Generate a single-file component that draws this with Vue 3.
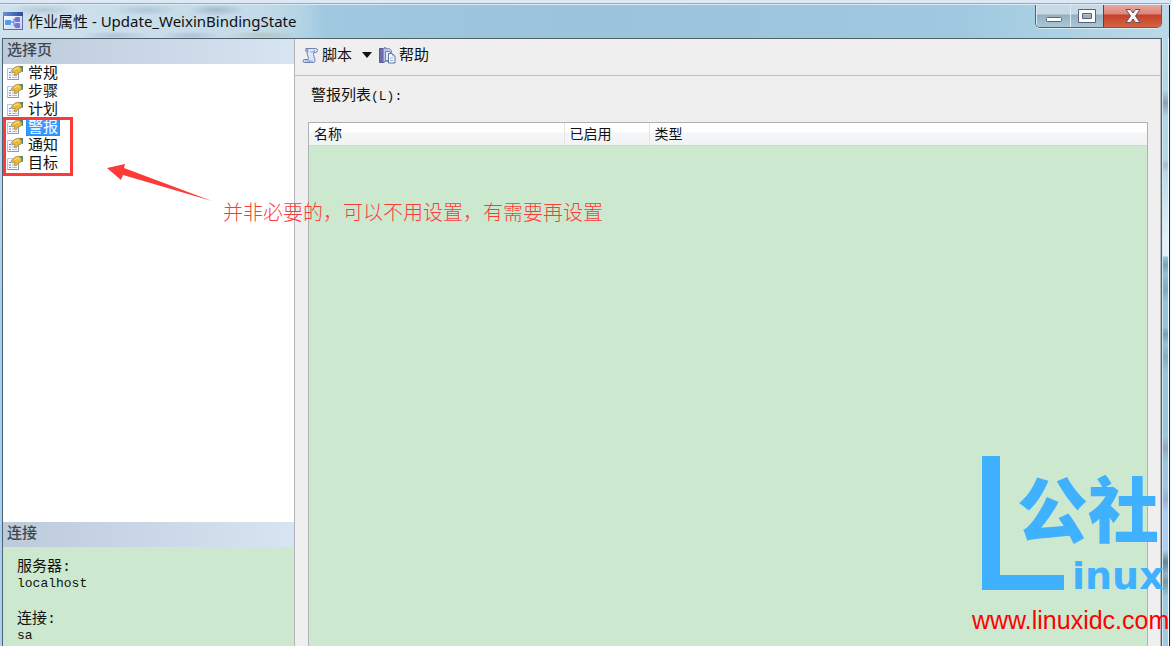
<script setup>
import { ref } from 'vue'

const pages = ['常规', '步骤', '计划', '警报', '通知', '目标']
const selected = ref('警报')
const columns = ['名称', '已启用', '类型']
</script>

<template>
  <div class="window">
    <header class="titlebar">
      <svg class="app-icon" width="20" height="18" viewBox="0 0 20 18" aria-hidden="true">
        <defs>
          <linearGradient id="appbar" x1="0" x2="1"><stop offset="0" stop-color="#6d8fd2" /><stop offset="1" stop-color="#2f4a9c" /></linearGradient>
          <linearGradient id="appbg" x1="0" x2="1" y2="1"><stop offset="0" stop-color="#fff" /><stop offset="1" stop-color="#c3cff0" /></linearGradient>
        </defs>
        <rect x=".5" y=".5" width="19" height="17" fill="url(#appbg)" stroke="#5870ad" />
        <rect width="20" height="4" fill="url(#appbar)" />
        <path d="M7 10h4M11 7v7M11 7h3M11 14h3" stroke="#7168c4" fill="none" />
        <rect x="2" y="8" width="6" height="5" rx="1" fill="#4b9df2" />
        <rect x="12" y="5" width="5" height="5" rx="1" fill="#7774d4" />
        <rect x="12" y="11" width="5" height="5" rx="1" fill="#7774d4" />
      </svg>
      <h1>作业属性 - Update_WeixinBindingState</h1>
      <div class="controls">
        <button class="min" aria-label="最小化">
          <svg width="18" height="16" viewBox="0 0 18 16"><rect x="1.5" y="9.5" width="15" height="4" rx="1" fill="#fff" stroke="#59656f" /></svg>
        </button>
        <button class="max" aria-label="最大化">
          <svg width="18" height="16" viewBox="0 0 18 16"><path fill="#fff" fill-rule="evenodd" stroke="#59617a" d="M.5 1.500h17v13H.5zM4.500 5.500h9v5h-9z" /></svg>
        </button>
        <button class="close" aria-label="关闭">
          <svg width="16" height="14" viewBox="0 0 16 14"><path d="M1 .5h4.500L8 4l2.500-3.500H15L10.500 7l4.500 6.500h-4.500L8 10l-2.500 3.500H1L5.500 7z" fill="#f8f8f8" stroke="#6b4b55" /></svg>
        </button>
      </div>
    </header>

    <div class="client">
      <aside>
        <h2>选择页</h2>
        <nav>
          <button v-for="page in pages" :key="page" :class="{ selected: selected === page }" @click="selected = page">
            <svg width="17" height="16" viewBox="0 0 17 16" aria-hidden="true">
              <path d="M.5 3.500h11v11H.5z" fill="#f7f9ff" stroke="#b9c2d8" />
              <path d="M.5 14.500h11V8" fill="none" stroke="#8b98bd" />
              <path d="M2 7.500h2M2 10h2M2 12.500h2" stroke="#6d8cd4" />
              <path d="M5 10h5M5 12.500h5" stroke="#b4bdd5" />
              <path d="M12 1h4v6l-3-1z" fill="#52866e" />
              <path d="M4 6l4-4 4-1 3 3-1 3-3 1-2 3-2-1 1-3-3 1z" fill="#e9b93a" stroke="#a8853a" stroke-width=".7" />
              <path d="M7 5l3-2 2 1" fill="none" stroke="#ffe68a" />
            </svg>
            <span>{{ page }}</span>
          </button>
        </nav>
        <h2>连接</h2>
        <dl>
          <dt>服务器:</dt>
          <dd>localhost</dd>
          <dt>连接:</dt>
          <dd>sa</dd>
        </dl>
      </aside>

      <main>
        <div class="toolbar">
          <button>
            <svg width="17" height="17" viewBox="0 0 17 17" aria-hidden="true">
              <path d="M4 1.500h9.500q2 0 2 2t-2 2H12q-1 2 0 4t1 4q0 2-2 2H3q-2 0-2-1.500t2-1.500h3q1-1 0-3T5 5z" fill="#dce6f8" stroke="#6c80ae" />
              <path d="M4 1.500q2 0 2 2t-2 1q-1-1 0-3zM6 12.500q2 1 1 3M12 5.500q-1-2 1-2" fill="#b5c7e8" stroke="#7388b6" />
              <path d="M3 14h8M8 5h3" stroke="#90a7d6" />
            </svg>
            <span>脚本</span>
          </button>
          <button class="drop" aria-label="脚本选项">
            <svg width="10" height="6" viewBox="0 0 10 6"><path d="M0 0h10L5 6z" fill="#111" /></svg>
          </button>
          <button>
            <svg width="17" height="17" viewBox="0 0 17 17" aria-hidden="true">
              <path d="M.5 1.500h4l2-1v14l-2 1h-4z" fill="#716cad" stroke="#57588f" />
              <path d="M4.500 1.500h6l2 2v11h-8z" fill="#b9c8e6" stroke="#8494bd" />
              <path d="M6.500 4.500h4l2 2v7h-6z" fill="#e4ecfa" stroke="#7285ad" />
              <path d="M9.500 6.500h4l2.500 2.500v7H9.500z" fill="#f4f8ff" stroke="#60759f" />
              <path d="M13.500 6.500V9H16M11 11h3M11 13.500h3" fill="none" stroke="#9dafd4" />
            </svg>
            <span>帮助</span>
          </button>
        </div>
        <section>
          <h3 id="alerts">警报列表<span>(L):</span></h3>
          <div class="list">
            <table aria-labelledby="alerts">
              <thead>
                <tr><th v-for="column in columns" :key="column" scope="col">{{ column }}</th></tr>
              </thead>
            </table>
          </div>
        </section>
      </main>
    </div>

    <div class="highlight"></div>
    <svg class="arrow" width="106" height="40" viewBox="0 0 106 40" aria-hidden="true">
      <path d="M0 4l18-4-1 4 88 33-89-26-2 5z" fill="#fc3a38" />
    </svg>
    <p class="note">并非必要的，可以不用设置，有需要再设置</p>

    <div class="watermark">
      <svg width="82" height="134" viewBox="0 0 82 134" aria-hidden="true"><path d="M0 0h18v119h64v15H0z" fill="#40b1ff" /></svg>
      <span class="cn">公社</span>
      <span class="en">inux</span>
      <span class="url">www.linuxidc.com</span>
    </div>
  </div>
</template>

<style>
body { margin: 0; overflow: hidden; }
</style>

<style scoped>
* { box-sizing: border-box; }
h1, h2, h3, p, dl, dd { margin: 0; font-weight: 400; }
button { margin: 0; padding: 0; border: 0; background: none; color: inherit; font: inherit; }
svg { display: block; flex: none; }

.window {
  position: relative;
  display: flex;
  flex-direction: column;
  height: 100vh;
  padding: 0 9px 0 2px;
  overflow: hidden;
  color: #111;
  font: 15px/18px "Liberation Sans", "Noto Sans CJK SC", sans-serif;
  background:
    linear-gradient(#161e27, #161e27) right 1px top 5px / 1px 100% no-repeat,
    linear-gradient(#f2f8fb, #f2f8fb) right 0 top 5px / 3px 100% no-repeat,
    linear-gradient(#b9dbe9 0, #b3d6e6 78px, #8d9fba 91px, #b3d6e6 105px, #b5d8e7 147px, #abb8cb 153px, #b9dae8 160px, #e5f1f8 230px, #e5f1f8 244px, #96c5da 245px, #7ba4b6 253px, #93c2d6 262px, #80aabd 278px, #96c5da 290px, #96c5da 315px, #779fb2 322px, #96c5da 332px, #85afc1 345px, #9bc7da 360px, #9bc7da 425px, #94a5bf 436px, #9bc7da 448px, #a5c6e6 475px, #95b0d3 487px, #abcef4 500px, #abcef4 538px, #648695 550px, #8db6c8 562px, #7398a8 570px, #9dcadd 585px) right 3px top 12px / 5px 100% no-repeat,
    linear-gradient(#c7e0ed, #a5d0f0 300px, #a8d1f6) left / 2px 100% no-repeat,
    #d3e7f0;
}
.titlebar {
  display: flex;
  align-items: flex-start;
  flex: none;
  height: 38px;
  margin: 0 -7px 0 -2px;
  padding-left: 3px;
  background:
    linear-gradient(#dce8f5 0 3px, #96a9bf 3px 4px, #dcecf5 4px 5px, transparent 5px),
    radial-gradient(closest-side, #6d89a344, transparent) 8px 4px / 70px 12px no-repeat,
    radial-gradient(closest-side, #6d89a344, transparent) 110px 4px / 70px 12px no-repeat,
    radial-gradient(closest-side, #5f788f55, transparent) 188px 4px / 56px 12px no-repeat,
    radial-gradient(closest-side, #6974b544, transparent) 80px 31px / 70px 9px no-repeat,
    radial-gradient(closest-side, #6974b544, transparent) 160px 31px / 60px 9px no-repeat,
    radial-gradient(closest-side, #8d8c6244, transparent) 225px 31px / 75px 9px no-repeat,
    linear-gradient(90deg, #d0e2ed 0, #c3dae8 260px, #b5d4e4 300px, #9fc9e0 325px, #9ac3dc 50%, #9fc9e0 82%, #bad9e8 100%);
}
.app-icon { margin-top: 12px; }
h1 { flex: 1; margin: 11px 0 0 5px; font: 15px/20px "Noto Sans", "Noto Sans CJK SC", sans-serif; white-space: nowrap; }
.controls {
  display: flex;
  height: 23px;
  margin: 5px 7px 0 0;
  border: 1px solid #55636e;
  border-top: 0;
  border-radius: 0 0 5px 5px;
  overflow: hidden;
  box-shadow: 0 1px 0 #d9ecf5;
}
.controls button { display: grid; place-items: center; background: linear-gradient(#c9d8e2 0 9px, #94afc1 10px, #aac7d8); border-left: 1px solid #ddebf3; }
.min { width: 34px; }
.max { width: 33px; }
.controls .close { width: 58px; border-left: 1px solid #75362f; background: linear-gradient(#eaa79e, #dc8578 9px, #c6402a 10px, #d26543); }

.client { display: flex; flex: 1; min-height: 0; border: 1px solid #51606b; border-bottom: 0; }
aside { display: flex; flex-direction: column; flex: 0 0 292px; padding-left: 1px; border-right: 1px solid #b4b5ba; background: #fff; }
h2 { flex: none; height: 25px; margin-left: -1px; padding: 1px 4px; color: #3c4850; font-size: 15px; font-weight: 500; line-height: 19px; background: linear-gradient(90deg, #bdcada, #d7e4f2); }
nav { flex: 1; padding-left: 3px; }
nav button { display: flex; align-items: center; gap: 2px; height: 18px; }
nav span { padding: 0 2px; line-height: 18px; }
nav .selected span { color: #fff; background: #3399ff; outline: 1px dotted #b06a20; outline-offset: -1px; }
dl { flex: none; height: 99px; margin-left: -1px; padding: 12px 14px 0; background: #cce8cf; font-family: "Liberation Mono", "Noto Sans CJK SC", monospace; font-size: 15px; }
dt { height: 18px; line-height: 18px; }
dd { margin-bottom: 20px; font-size: 13px; line-height: 14px; }

main { display: flex; flex-direction: column; flex: 1; min-width: 0; background: #efefef; border-right: 1px solid #b8b8bd; }
.toolbar { display: flex; align-items: center; flex: none; height: 37px; padding: 0 7px 4px; border-bottom: 1px solid #bfbfc5; }
.toolbar button { display: flex; align-items: center; gap: 3px; }
.toolbar .drop { padding: 0 7px 0 10px; }
section { display: flex; flex-direction: column; flex: 1; min-height: 0; padding: 9px 12px 0 13px; }
h3 { margin: 0 0 17px 3px; font-size: 15px; line-height: 20px; height: 20px; }
h3 span { font: 13px/16px "Liberation Mono", monospace; }
.list { flex: 1; border: 1px solid #adb2b5; border-bottom: 0; background: #cce8cf; }
table { width: 100%; border-collapse: collapse; table-layout: fixed; }
th { height: 22px; padding: 0 5px; border-right: 1px solid #e2e4e8; border-bottom: 1px solid #d5d5d5; background: linear-gradient(#fff 0 9px, #f5f6f8 10px, #f1f2f4); font-size: 14px; font-weight: 400; line-height: 20px; text-align: left; }
th:nth-child(1) { width: 255px; }
th:nth-child(2) { width: 85px; }
th:last-child { border-right: 0; }

.highlight { position: absolute; left: 3px; top: 117px; width: 70px; height: 59px; border: 3px solid #fc3a38; }
.arrow { position: absolute; left: 107px; top: 164px; }
.note { position: absolute; left: 223px; top: 200px; color: #fc3a38; font: 300 20px/24px "Noto Sans CJK SC", sans-serif; white-space: nowrap; }
.watermark { position: absolute; right: 0; bottom: 0; width: 199px; height: 190px; color: #40b1ff; white-space: nowrap; }
.watermark svg { position: absolute; left: 10px; top: 0; }
.cn { position: absolute; left: 45px; top: 11px; font: 900 71px/76px "Noto Sans CJK SC", sans-serif; }
.en { position: absolute; left: 100px; top: 98px; font: 700 38px/44px "DejaVu Sans", sans-serif; }
.url { position: absolute; left: 0; top: 146px; color: #f00; font: 25px/36px "Liberation Sans", sans-serif; }
</style>
